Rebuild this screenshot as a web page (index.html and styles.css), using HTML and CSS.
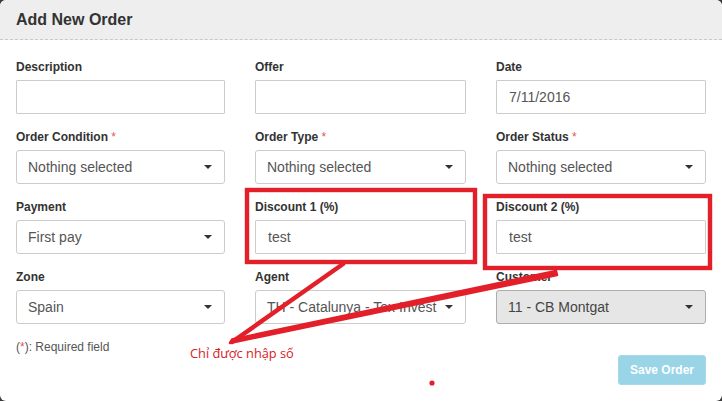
FILE: index.html
```html
<!DOCTYPE html>
<html lang="en">
<head>
<meta charset="utf-8">
<title>Add New Order</title>
<link rel="stylesheet" href="styles.css">
</head>
<body>
<div class="modal">
  <div class="modal-header">
    <h4 class="modal-title">Add New Order</h4>
  </div>
  <div class="modal-body">
    <div class="form-grid">
      <div class="form-group">
        <label class="label">Description</label>
        <input class="input" type="text" value="">
      </div>
      <div class="form-group">
        <label class="label">Offer</label>
        <input class="input" type="text" value="">
      </div>
      <div class="form-group">
        <label class="label">Date</label>
        <input class="input" type="text" value="7/11/2016">
      </div>

      <div class="form-group">
        <label class="label">Order Condition <span class="req">*</span></label>
        <button class="select" type="button"><span class="select-text">Nothing selected</span><span class="caret"></span></button>
      </div>
      <div class="form-group">
        <label class="label">Order Type <span class="req">*</span></label>
        <button class="select" type="button"><span class="select-text">Nothing selected</span><span class="caret"></span></button>
      </div>
      <div class="form-group">
        <label class="label">Order Status <span class="req">*</span></label>
        <button class="select" type="button"><span class="select-text">Nothing selected</span><span class="caret"></span></button>
      </div>

      <div class="form-group">
        <label class="label">Payment</label>
        <button class="select" type="button"><span class="select-text">First pay</span><span class="caret"></span></button>
      </div>
      <div class="form-group">
        <label class="label">Discount 1 (%)</label>
        <input class="input" type="text" value="test">
      </div>
      <div class="form-group">
        <label class="label">Discount 2 (%)</label>
        <input class="input" type="text" value="test">
      </div>

      <div class="form-group">
        <label class="label">Zone</label>
        <button class="select" type="button"><span class="select-text">Spain</span><span class="caret"></span></button>
      </div>
      <div class="form-group">
        <label class="label">Agent</label>
        <button class="select" type="button"><span class="select-text">TH - Catalunya - Tex Invest</span><span class="caret"></span></button>
      </div>
      <div class="form-group">
        <label class="label">Customer</label>
        <button class="select select-active" type="button"><span class="select-text">11 - CB Montgat</span><span class="caret"></span></button>
      </div>
    </div>
    <p class="note">(<span class="req">*</span>): Required field</p>
    <div class="modal-footer">
      <button class="btn-save" type="button" disabled>Save Order</button>
    </div>
  </div>

  <svg class="annot" viewBox="0 0 722 401" width="722" height="401" aria-hidden="true">
    <rect x="247" y="190" width="228" height="72" fill="none" stroke="#e3202a" stroke-width="4.4"/>
    <rect x="485" y="196" width="225" height="72" fill="none" stroke="#e3202a" stroke-width="4.4"/>
    <line x1="343" y1="264" x2="232" y2="342" stroke="#e3202a" stroke-width="4.5" stroke-linecap="round"/>
    <path d="M230 343 L232 339.5 L556 271 L557 275 Z" fill="#e3202a" stroke="#e3202a" stroke-width="2.5" stroke-linejoin="round"/>
    <circle cx="432" cy="383" r="2.6" fill="#e3202a"/>
  </svg>
  <div class="annot-text">Chỉ được nhập số</div>
</div>
</body>
</html>
```

FILE: styles.css
```css
html, body {
  margin: 0;
  padding: 0;
  background: #3a3a3a;
}

.modal {
  position: relative;
  width: 722px;
  height: 401px;
  background: #ffffff;
  border-radius: 6px;
  overflow: hidden;
  font-family: "Liberation Sans", Arial, sans-serif;
  color: #333333;
}

.modal-header {
  height: 39px;
  background: #eeeeee;
  border-bottom: 1px dashed #c8c8c8;
  padding: 0 16px;
}

.modal-title {
  margin: 0;
  font-size: 16px;
  font-weight: bold;
  line-height: 39px;
  color: #333333;
}

.modal-body {
  padding: 18px 16px 0 16px;
}

.form-grid {
  display: grid;
  grid-template-columns: 209px 211px 210px;
  column-gap: 30px;
  row-gap: 14px;
}

.form-group {
  display: flex;
  flex-direction: column;
}

.label {
  display: block;
  font-size: 12px;
  font-weight: bold;
  line-height: 18px;
  height: 18px;
  margin-bottom: 4px;
  color: #333333;
  white-space: nowrap;
}

.req {
  color: #e05a55;
  font-weight: normal;
}

.input {
  box-sizing: border-box;
  width: 100%;
  height: 34px;
  margin: 0;
  padding: 6px 12px;
  border: 1px solid #cccccc;
  border-radius: 1px;
  background: #ffffff;
  font-family: "Liberation Sans", Arial, sans-serif;
  font-size: 14px;
  color: #555555;
  outline: none;
}

.select {
  box-sizing: border-box;
  display: flex;
  align-items: center;
  width: 100%;
  height: 34px;
  margin: 0;
  padding: 0 12px 0 11px;
  border: 1px solid #cccccc;
  border-radius: 3px;
  background: #ffffff;
  font-family: "Liberation Sans", Arial, sans-serif;
  font-size: 14px;
  color: #555555;
  text-align: left;
  cursor: pointer;
}

.select-active {
  background: #e6e6e6;
  border-color: #adadad;
  color: #444444;
}

.select-text {
  flex: 1;
  overflow: hidden;
  white-space: nowrap;
  margin-right: 8px;
}

.caret {
  flex: none;
  width: 0;
  height: 0;
  border-top: 4px solid #333333;
  border-left: 4px solid transparent;
  border-right: 4px solid transparent;
}

.note {
  margin: 14px 0 0 0;
  font-size: 12px;
  line-height: 18px;
  height: 17px;
  color: #555555;
}

.modal-footer {
  display: flex;
  justify-content: flex-end;
}

.btn-save {
  box-sizing: border-box;
  height: 30px;
  padding: 5px 11px;
  border: 1px solid #a3d9ea;
  border-radius: 3px;
  background: #99d4e7;
  color: #ffffff;
  font-family: "Liberation Sans", Arial, sans-serif;
  font-size: 12px;
  font-weight: bold;
  line-height: 18px;
}

.annot {
  position: absolute;
  left: 0;
  top: 0;
  pointer-events: none;
}

.annot-text {
  position: absolute;
  left: 190px;
  top: 344px;
  font-family: "Open Sans", "Noto Sans", sans-serif;
  font-size: 12.8px;
  line-height: 18px;
  color: #d8201f;
  white-space: nowrap;
}
```
